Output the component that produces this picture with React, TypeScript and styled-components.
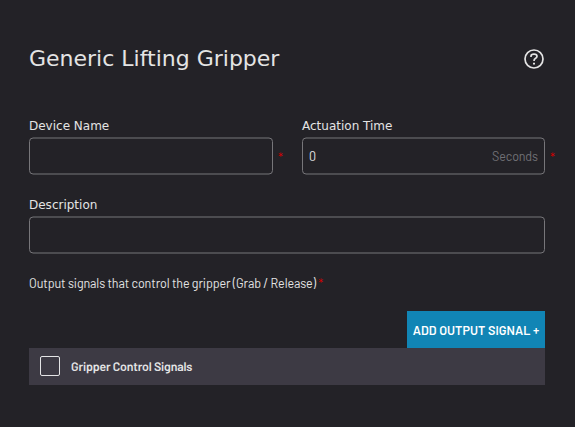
import React from "react";
import styled, { createGlobalStyle } from "styled-components";

const Global = createGlobalStyle`
  * { box-sizing: border-box; }
  body { margin: 0; background: #232227; overflow: hidden; }
`;

const Panel = styled.main`
  width: 575px;
  height: 427px;
  padding: 44px 30px 0 29px;
  background: #232227;
  color: #e4e4e4;
  font-family: Barlow, Roboto, sans-serif;
  font-size: 12.5px;
  letter-spacing: -0.11px;
`;

const Header = styled.header`
  display: flex;
  justify-content: space-between;
  align-items: center;
  height: 30px;
`;

const Title = styled.h1`
  margin: 0;
  font: 400 22px/30px "DejaVu Sans", sans-serif;
  letter-spacing: 0;
  white-space: nowrap;
`;

const HelpButton = styled.button`
  display: flex;
  padding: 0;
  margin-right: 1px;
  border: 0;
  background: none;
  color: #e4e4e4;
`;

const Columns = styled.div`
  display: grid;
  grid-template-columns: 244px 243px;
  column-gap: 29px;
  margin-top: 43px;
`;

const Field = styled.label`
  position: relative;
  display: block;
`;

const WideField = styled(Field)`
  width: 516px;
  margin-top: 21px;
`;

const Label = styled.span`
  display: block;
  height: 21px;
  padding-top: 1px;
  font: 400 12px/17px "DejaVu Sans", sans-serif;
  letter-spacing: 0;
`;

const InputBox = styled.div`
  position: relative;
  display: flex;
  align-items: center;
  height: 37px;
  padding: 0 7px 1px;

  &::before {
    content: "";
    position: absolute;
    inset: 0;
    border: 1px solid #77767a;
    border-radius: 4px;
    transform: translateY(-0.5px);
    pointer-events: none;
  }
`;

const Input = styled.input`
  flex: 1;
  min-width: 0;
  padding: 0;
  border: 0;
  outline: 0;
  background: transparent;
  color: #e4e4e4;
  font: 400 12.5px/16px Barlow, Roboto, sans-serif;
`;

const Unit = styled.span`
  color: #717176;
`;

const Required = styled.span`
  color: #d00000;
`;

const FieldMark = styled(Required)`
  position: absolute;
  left: calc(100% + 5px);
  top: 33px;
  line-height: 14px;
`;

const Hint = styled.p`
  width: 516px;
  margin: 21px 0 0;
  line-height: 16px;
  white-space: nowrap;
`;

const Signals = styled.section`
  display: flex;
  flex-direction: column;
  width: 516px;
  margin-top: 20px;
`;

const AddButton = styled.button`
  align-self: flex-end;
  width: 138px;
  height: 37px;
  padding: 0;
  border: 0;
  background: #1185b5;
  color: #fff;
  font: 600 12.6px/16px Barlow, Roboto, sans-serif;
  letter-spacing: 0.05px;
  white-space: nowrap;
`;

const SignalRow = styled.label`
  display: flex;
  align-items: center;
  gap: 11px;
  height: 37px;
  padding-left: 11px;
  background: #3d3a44;
  font-weight: 600;
`;

const SignalName = styled.span`
  margin-top: 1px;
  font-size: 12.35px;
  letter-spacing: -0.16px;
  text-rendering: geometricPrecision;
`;

const Checkbox = styled.input`
  appearance: none;
  width: 20px;
  height: 20px;
  margin: 0 0 1px;
  border: 1px solid #e4e4e6;
  border-radius: 2px;
`;

export default function App() {
  return (
    <Panel>
      <Global />
      <Header>
        <Title>Generic Lifting Gripper</Title>
        <HelpButton aria-label="Help">
          <svg width="20" height="20" viewBox="0 0 20 20" fill="none" stroke="currentColor" strokeWidth="1.7">
            <circle cx="10" cy="10" r="9" />
            <path d="M7 8V7.2Q7 5.2 10 5.2Q13 5.2 13 7.3Q13 8.7 11.3 9.5Q10 10.2 10 12" />
            <path d="M10 13.7V15.6" strokeWidth="2" />
          </svg>
        </HelpButton>
      </Header>
      <Columns>
        <Field>
          <Label>Device Name</Label>
          <InputBox><Input /></InputBox>
          <FieldMark>*</FieldMark>
        </Field>
        <Field>
          <Label>Actuation Time</Label>
          <InputBox>
            <Input defaultValue="0" />
            <Unit>Seconds</Unit>
          </InputBox>
          <FieldMark>*</FieldMark>
        </Field>
      </Columns>
      <WideField>
        <Label>Description</Label>
        <InputBox><Input /></InputBox>
      </WideField>
      <Hint>
        Output signals that control the gripper (Grab / Release) <Required>*</Required>
      </Hint>
      <Signals>
        <AddButton>ADD OUTPUT SIGNAL +</AddButton>
        <SignalRow>
          <Checkbox type="checkbox" />
          <SignalName>Gripper Control Signals</SignalName>
        </SignalRow>
      </Signals>
    </Panel>
  );
}
